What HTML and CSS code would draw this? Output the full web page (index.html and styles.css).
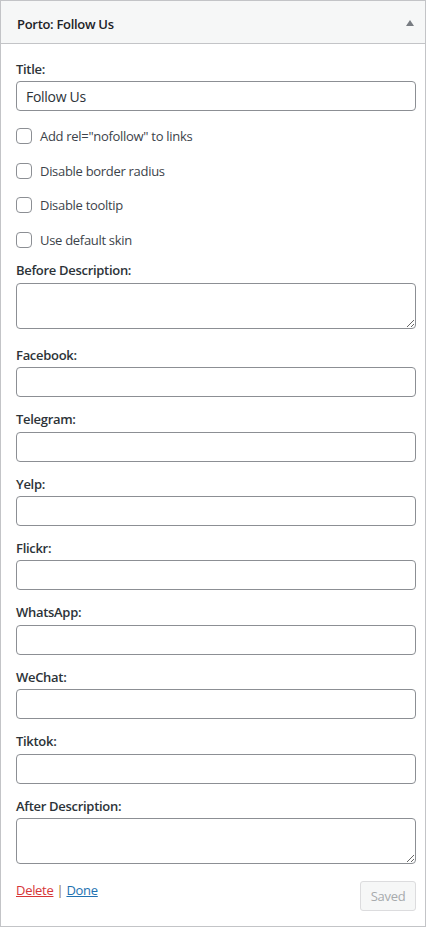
FILE: index.html
```html
<!DOCTYPE html>
<html>
<head>
<meta charset="utf-8">
<link rel="stylesheet" href="styles.css">
</head>
<body>
<div class="widget">
  <div class="widget-top">
    <h3 class="widget-title">Porto: Follow Us</h3>
    <span class="toggle-arrow"></span>
  </div>
  <div class="widget-inside">
    <div class="field">
      <label class="field-label">Title:</label>
      <input class="text-input" type="text" value="Follow Us">
    </div>
    <div class="checks">
      <label class="check-row"><span class="checkbox"></span><span>Add rel="nofollow" to links</span></label>
      <label class="check-row"><span class="checkbox"></span><span>Disable border radius</span></label>
      <label class="check-row"><span class="checkbox"></span><span>Disable tooltip</span></label>
      <label class="check-row"><span class="checkbox"></span><span>Use default skin</span></label>
    </div>
    <div class="field field-area">
      <label class="field-label">Before Description:</label>
      <textarea class="text-area"></textarea>
    </div>
    <div class="field">
      <label class="field-label">Facebook:</label>
      <input class="text-input" type="text">
    </div>
    <div class="field">
      <label class="field-label">Telegram:</label>
      <input class="text-input" type="text">
    </div>
    <div class="field">
      <label class="field-label">Yelp:</label>
      <input class="text-input" type="text">
    </div>
    <div class="field">
      <label class="field-label">Flickr:</label>
      <input class="text-input" type="text">
    </div>
    <div class="field">
      <label class="field-label">WhatsApp:</label>
      <input class="text-input" type="text">
    </div>
    <div class="field">
      <label class="field-label">WeChat:</label>
      <input class="text-input" type="text">
    </div>
    <div class="field">
      <label class="field-label">Tiktok:</label>
      <input class="text-input" type="text">
    </div>
    <div class="field">
      <label class="field-label">After Description:</label>
      <textarea class="text-area"></textarea>
    </div>
    <div class="actions">
      <div class="links">
        <a class="link-delete" href="#">Delete</a><span class="sep"> | </span><a class="link-done" href="#">Done</a>
      </div>
      <button class="saved-btn" type="button">Saved</button>
    </div>
  </div>
</div>
</body>
</html>
```

FILE: styles.css
```css
* { box-sizing: border-box; }
html, body { margin: 0; padding: 0; background: #fff; }
body {
  font-family: "Open Sans", "Noto Sans", sans-serif;
  font-size: 13px;
  color: #3c434a;
}
.widget {
  width: 426px;
  border: 1px solid #c3c4c7;
  background: #fff;
}
.widget-top {
  height: 43px;
  background: #f6f7f7;
  border-bottom: 1px solid #c3c4c7;
  display: flex;
  align-items: center;
  justify-content: space-between;
  padding: 3px 11px 0 16px;
}
.widget-title {
  margin: 0;
  font-size: 13px;
  font-weight: 600;
  color: #1d2327;
  letter-spacing: -0.3px;
}
.toggle-arrow {
  width: 0;
  height: 0;
  border-left: 4px solid transparent;
  border-right: 4px solid transparent;
  border-bottom: 6px solid #787c82;
  margin-top: -2px;
}
.widget-inside {
  padding: 3px 9px 15px 15px;
}
.field { margin-top: 13px; display: flex; flex-direction: column; }
.field-label {
  display: block;
  font-weight: 600;
  line-height: 18.4px;
  color: #2c3338;
  letter-spacing: -0.3px;
}
.text-input {
  margin: 3px 0 0;
  height: 30px;
  width: 100%;
  border: 1px solid #8c8f94;
  border-radius: 4px;
  padding: 0 9px;
  font-family: inherit;
  font-size: 14px;
  color: #2c3338;
  background: #fff;
  letter-spacing: -0.3px;
}
.text-area {
  margin: 3px 0 0;
  height: 46px;
  width: 100%;
  border: 1px solid #8c8f94;
  border-radius: 4px;
  padding: 2px 6px;
  font-family: inherit;
  font-size: 14px;
  background: #fff;
}
.field-area { padding-bottom: 4px; }
.checks {
  margin-top: 14px;
  display: flex;
  flex-direction: column;
  gap: 13px;
}
.check-row {
  display: flex;
  align-items: center;
  gap: 8px;
  height: 21.5px;
  color: #3c434a;
  letter-spacing: -0.3px;
}
.checkbox {
  width: 16px;
  height: 16px;
  border: 1px solid #8c8f94;
  border-radius: 4px;
  background: #fff;
  flex: none;
}
.checks + .field { margin-top: 11px; }
.actions {
  margin-top: 11px;
  display: flex;
  justify-content: space-between;
  align-items: flex-start;
}
.links { line-height: 18px; padding-top: 6px; letter-spacing: -0.3px; }
.link-delete { color: #d63638; }
.link-done { color: #2271b1; }
.sep { color: #8a6d3b; }
.saved-btn {
  margin-top: 6px;
  height: 30px;
  width: 56px;
  padding: 0;
  border: 1px solid #dcdcde;
  border-radius: 3px;
  background: #f6f7f7;
  color: #a7aaad;
  font-family: inherit;
  font-size: 13px;
  letter-spacing: -0.3px;
}
```
